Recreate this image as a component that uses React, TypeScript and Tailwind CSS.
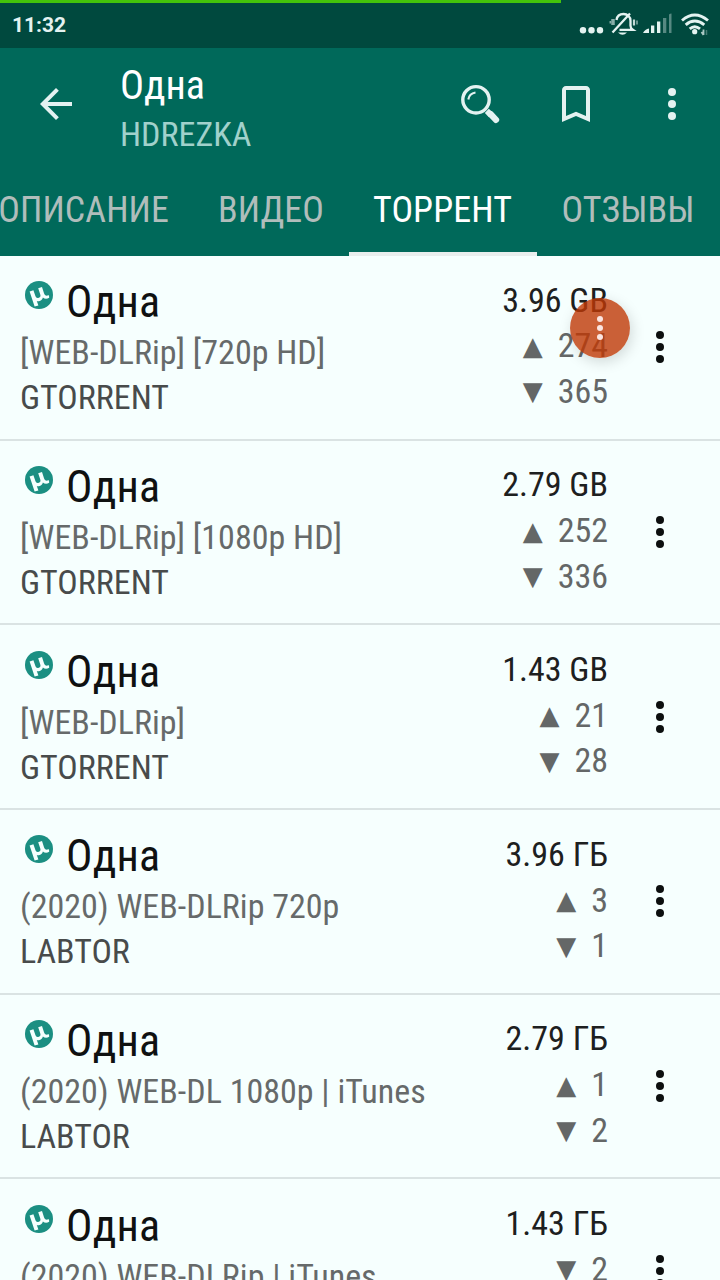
import React from "react";

type Release = {
  quality: string;
  tracker: string;
  size: string;
  seeds?: number;
  peers: number;
};

const releases: Release[] = [
  { quality: "[WEB-DLRip] [720p HD]", tracker: "GTORRENT", size: "3.96 GB", seeds: 274, peers: 365 },
  { quality: "[WEB-DLRip] [1080p HD]", tracker: "GTORRENT", size: "2.79 GB", seeds: 252, peers: 336 },
  { quality: "[WEB-DLRip]", tracker: "GTORRENT", size: "1.43 GB", seeds: 21, peers: 28 },
  { quality: "(2020) WEB-DLRip 720p", tracker: "LABTOR", size: "3.96 ГБ", seeds: 3, peers: 1 },
  { quality: "(2020) WEB-DL 1080p | iTunes", tracker: "LABTOR", size: "2.79 ГБ", seeds: 1, peers: 2 },
  { quality: "(2020) WEB-DLRip | iTunes", tracker: "LABTOR", size: "1.43 ГБ", peers: 2 },
];

function Dots({ className }: { className: string }) {
  return (
    <svg viewBox="0 0 8 32" className={className} fill="currentColor">
      <circle cx="4" cy="4" r="4" />
      <circle cx="4" cy="16" r="4" />
      <circle cx="4" cy="28" r="4" />
    </svg>
  );
}

function TorrentLogo() {
  return (
    <svg viewBox="0 0 28 28" className="mt-[5px] h-[28px] w-[28px] shrink-0">
      <circle cx="14" cy="14" r="14" fill="#1b8f82" />
      <path
        d="M4.6 10.4L8.4 9.3L10.4 15.1C11 16.9 12.2 17.4 13.8 16.8C15.5 16.2 15.8 15 15.2 13.2L13.2 7.3L17 6L19 12.2C19.6 14 20.6 15 22.6 14.6L24 14.3L24.2 16.8C21.8 18.2 19.5 18 17.9 16.4C17.3 18.6 15.9 19.8 13.9 20.2C13 20.4 12.3 20.3 11.8 20L13.4 24.6L9.6 25.6Z"
        fill="#f5fffd"
      />
    </svg>
  );
}

function Count({ mark, value }: { mark: string; value: number }) {
  return (
    <div className="flex h-[45.5px] items-center justify-end text-[#646767]">
      <span className="mr-[15px] pt-px font-['DejaVu_Sans'] text-[26px] leading-[45px]">{mark}</span>
      <span>{value}</span>
    </div>
  );
}

function Row({ item }: { item: Release }) {
  return (
    <div className="flex h-[184.7px] shrink-0 border-b-2 border-[#dae3e3] pl-[20px] text-[34px] leading-[45px] whitespace-nowrap">
      <div className="flex-1 pt-[20.4px]">
        <div className="mb-[2px] flex pl-[5px]">
          <TorrentLogo />
          <h2 className="ml-[13px] text-[44px] leading-[52px] tracking-[0.2px] text-[#0f1111]">Одна</h2>
        </div>
        <p className="text-[#666a6a]">{item.quality}</p>
        <p className="text-[#484b4b]">{item.tracker}</p>
      </div>
      <div className="pt-[21.7px] text-right">
        <div className="h-[45.5px] text-[#1d2020]">{item.size}</div>
        {item.seeds !== undefined && <Count mark="▲" value={item.seeds} />}
        <Count mark="▼" value={item.peers} />
      </div>
      <button className="flex w-[112px] justify-center pt-[75.4px] pr-[8px] text-[#0c0f0f]">
        <Dots className="h-[32px] w-[8px]" />
      </button>
    </div>
  );
}

function StatusBar() {
  return (
    <div className="flex h-[48px] shrink-0 flex-col bg-[#00493e]">
      <div className="h-[3px] w-[561px] bg-[#43c40b]" />
      <div className="flex flex-1 items-center pl-[12px] text-[#e4f3f1]">
        <span className="flex-1 font-['Roboto'] text-[21px] leading-none font-bold">11:32</span>
        <svg viewBox="0 0 144 45" className="h-[45px] w-[144px]" fill="none" stroke="currentColor">
          <g fill="currentColor" stroke="none">
            <circle cx="7" cy="27.3" r="3.2" />
            <circle cx="15.5" cy="27.3" r="3.2" />
            <circle cx="24" cy="27.3" r="3.2" />
            <path d="M42 29.5h9q-4.500 4.500-9 0z" />
            <path d="M67 30q2-4 6-4.500v4.500zM75 22.500h3.300V30H75zM81 18.500h3.300V30H81z" />
            <path d="M87 15h3.300v15H87zM93 11.500q1-1 2.500-1V30H93z" opacity=".38" />
            <circle cx="118.700" cy="28.700" r="2.600" />
          </g>
          <path
            d="M43.500 26.800h13.300q-2.300-1.500-2.300-4v-5c0-4-3-6.800-7-6.800s-6.500 2.500-7 6M36.500 29.500L54 10.500"
            strokeWidth="2.300"
          />
          <path d="M37 16v6" strokeWidth="3.500" opacity=".6" />
          <path d="M58 16.500v6" strokeWidth="2.200" opacity=".85" />
          <path d="M61 17.500v4M34.300 18v2.500" strokeWidth="1.500" opacity=".6" />
          <path d="M106 17.500q12.700-11 26 0M109.700 21.800q9-7.600 18.600 0M113.700 25.800q5-4.300 10.300 0" strokeWidth="2.900" />
          <path d="M127.500 26.500v5.500M125.500 29l2 3" strokeWidth="1.800" opacity=".75" />
          <path d="M130.500 27v5" strokeWidth="1.500" opacity=".3" />
        </svg>
      </div>
    </div>
  );
}

function Toolbar() {
  return (
    <header className="flex h-[112px] shrink-0 text-[#e4f2f1]">
      <svg viewBox="0 0 24 24" className="mt-[32px] ml-[32px] h-[48px] w-[48px]" fill="currentColor">
        <path d="M20 11H7.83l5.59-5.59L12 4l-8 8 8 8 1.41-1.41L7.83 13H20v-2z" />
      </svg>
      <div className="ml-[40px] flex-1 pt-[14px]">
        <h1 className="text-[40px] leading-[48px] text-white">Одна</h1>
        <p className="text-[34px] leading-[48px] text-[#a1d1cb]">HDREZKA</p>
      </div>
      <svg viewBox="0 0 40 40" className="mt-[36px] h-[40px] w-[40px]" fill="none" stroke="currentColor">
        <circle cx="16" cy="15.800" r="13.200" strokeWidth="3.400" />
        <path d="M8.300 15.500q.9-6 7.200-7" strokeWidth="2.100" />
        <path d="M30.500 30l5.500 5.800" strokeWidth="6.300" strokeLinecap="round" />
        <path d="M24.800 29l4-4.200 4.500 4.500-4.300 4z" fill="currentColor" stroke="none" />
      </svg>
      <svg viewBox="0 0 24 24" className="mt-[32px] ml-[52px] h-[48px] w-[48px]" fill="currentColor">
        <path d="M17 3H7c-1.100 0-2 .9-2 2v16l7-3 7 3V5c0-1.100-.9-2-2-2zm0 15l-5-2.180L7 18V5h10v13z" />
      </svg>
      <Dots className="mt-[40px] mr-[44px] ml-[68px] h-[32px] w-[8px]" />
    </header>
  );
}

function Tabs() {
  return (
    <nav className="flex h-[96px] shrink-0 text-[36px] leading-[101px] tracking-[0.1px] whitespace-nowrap text-[#b0bdbb]">
      <div className="flex w-[194px] shrink-0 justify-end pr-[25px]">ОПИСАНИЕ</div>
      <div className="w-[154px] shrink-0 text-center">ВИДЕО</div>
      <div className="ml-px w-[188px] shrink-0 border-b-4 border-[#e8eeed] pr-px text-center text-white">ТОРРЕНТ</div>
      <div className="w-[182px] shrink-0 text-center">ОТЗЫВЫ</div>
    </nav>
  );
}

export default function App() {
  return (
    <div className="relative flex h-[1280px] w-[720px] flex-col overflow-hidden bg-[#f6fffe] font-['Roboto_Condensed','Roboto',sans-serif]">
      <StatusBar />
      <div className="flex shrink-0 flex-col bg-[#00695a]">
        <Toolbar />
        <Tabs />
      </div>
      <main className="flex min-h-0 flex-1 flex-col overflow-hidden">
        {releases.map((item, i) => (
          <Row key={i} item={item} />
        ))}
      </main>
      <div className="absolute top-[298px] left-[570px] flex h-[60px] w-[60px] items-center justify-center rounded-full bg-[#bf3805]/80 text-[#fbe5e1] shadow-[2px_4px_14px_rgba(0,0,0,0.15)]">
        <Dots className="h-[24px] w-[6px]" />
      </div>
    </div>
  );
}
